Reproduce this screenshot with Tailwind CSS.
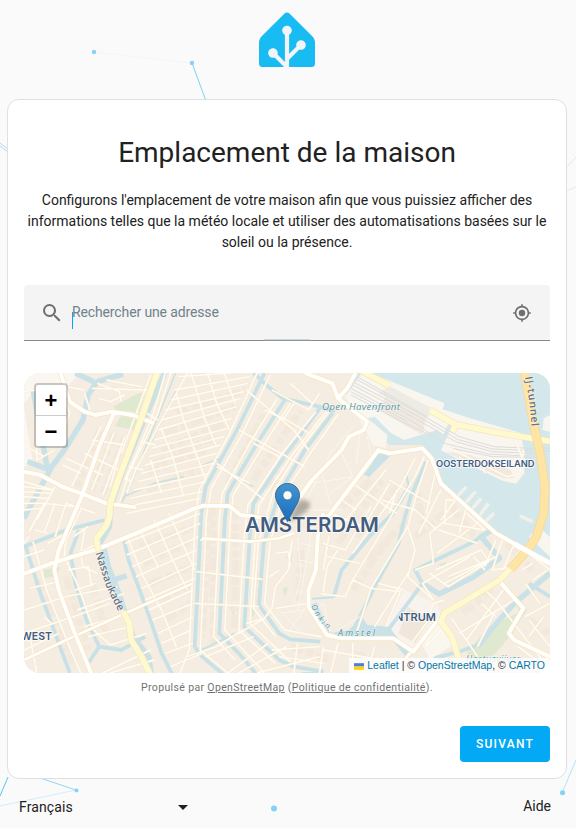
<!DOCTYPE html>
<html lang="fr">
<head>
<meta charset="utf-8">
<title>Home Assistant</title>
<script src="https://cdn.jsdelivr.net/npm/@tailwindcss/browser@4"></script>
</head>
<body class="relative h-[828px] w-[576px] overflow-hidden bg-[#fafafa] font-[Roboto,sans-serif] text-[#212121]">
<svg class="absolute inset-0" width="576" height="828" fill="none" stroke="#7fd0f7" stroke-width="1">
  <path d="M94 52 192 63" stroke="#f3f6f7"/><path d="M192 63 206 101"/>
  <path d="M0 143 8 149M0 146 8 152" stroke="#a9def8"/><path d="M576 157 566 168M576 187 566 191" stroke="#d5edf8"/>
  <path d="M0 796 8 777" stroke="#5cc3f5"/><path d="M40 778 76 790" stroke="#90d6f7"/><path d="M76 790 0 806" stroke="#d0edfb"/><path d="M562 793 576 760" stroke="#b5e2f8"/>
  <g fill="#83d2f8" stroke="none"><circle cx="94" cy="52" r="2.2"/><circle cx="192" cy="63" r="2.2"/><circle cx="76.500" cy="790.500" r="2"/><circle cx="274" cy="808.500" r="3"/><circle cx="562.500" cy="792.800" r="2.500"/></g>
</svg>
<div class="relative ml-[7px] flex w-[560px] flex-col">
  <header class="flex h-[99px] justify-center pt-[11px]">
    <svg width="56" height="56" viewBox="0 0 240 240"><path fill="#18bcf2" d="M240 224.762a15 15 0 0 1-15 15H15a15 15 0 0 1-15-15v-90c0-8.250 4.770-19.769 10.610-25.609l98.780-98.780c5.830-5.830 15.380-5.830 21.210 0l98.790 98.789c5.830 5.830 10.610 17.360 10.610 25.610z"/><path fill="#f2f4f9" d="m107.270 239.762-40.630-40.630c-2.090.72-4.320 1.130-6.640 1.130-11.300 0-20.500-9.200-20.500-20.500s9.200-20.500 20.500-20.500 20.500 9.200 20.500 20.500c0 2.330-.41 4.560-1.130 6.650l31.630 31.630v-115.880c-6.800-3.340-11.500-10.320-11.500-18.390 0-11.300 9.200-20.500 20.500-20.500s20.500 9.200 20.500 20.500c0 8.070-4.700 15.050-11.500 18.390v81.270l31.460-31.460c-.62-1.960-.96-4.040-.96-6.200 0-11.300 9.200-20.500 20.500-20.500s20.500 9.200 20.500 20.500-9.200 20.500-20.500 20.500c-2.500 0-4.880-.47-7.090-1.290L129 208.892v30.880z"/></svg>
  </header>
  <main class="flex h-[680px] flex-col rounded-xl border border-[#e0e0e0] bg-white px-4 pt-[35px]">
    <h1 class="text-center text-[28px] leading-9">Emplacement de la maison</h1>
    <p class="-mx-1 mt-[19px] text-center text-sm leading-[21px]">Configurons l'emplacement de votre maison afin que vous puissiez afficher des<br>informations telles que la météo locale et utiliser des automatisations basées sur le<br>soleil ou la présence.</p>
    <div class="relative mt-8 flex h-14 shrink-0 items-center rounded-t border-b border-[#8a8a8a] bg-[#f4f4f4] pr-4 pl-4">
      <svg class="size-6" viewBox="0 0 24 24" fill="#6f6f6f"><path d="M9.500 3A6.500 6.500 0 0 1 16 9.500c0 1.610-.59 3.090-1.560 4.230l.27.270h.79l5 5-1.500 1.500-5-5v-.79l-.27-.27A6.516 6.516 0 0 1 9.500 16 6.500 6.500 0 0 1 3 9.500 6.500 6.500 0 0 1 9.500 3m0 2C7 5 5 7 5 9.500S7 14 9.500 14 14 12 14 9.500 12 5 9.500 5Z"/></svg>
      <span class="mb-0.5 ml-2 text-sm tracking-[-0.13px] text-[#70828a]">Rechercher une adresse</span>
      <span class="absolute top-[27px] left-12 h-[17px] w-px bg-[#03a9f4]"></span>
      <span class="absolute -bottom-px left-[240px] h-0.5 w-[46px] bg-[#8fa9b4]/40"></span>
      <svg class="ml-auto size-6" viewBox="0 0 24 24"><g transform="translate(2.400 2.400) scale(.8)"><path fill="#6f6f6f" d="M12 8a4 4 0 0 1 4 4 4 4 0 0 1-4 4 4 4 0 0 1-4-4 4 4 0 0 1 4-4m-8.950 5H1v-2h2.050C3.500 6.830 6.830 3.500 11 3.050V1h2v2.050c4.170.45 7.500 3.780 7.950 7.950H23v2h-2.050c-.45 4.170-3.780 7.500-7.950 7.950V23h-2v-2.050C6.830 20.500 3.500 17.170 3.050 13M12 5a7 7 0 0 0-7 7 7 7 0 0 0 7 7 7 7 0 0 0 7-7 7 7 0 0 0-7-7Z"/></g></svg>
    </div>
    <div class="relative mt-8 h-[300px] shrink-0 overflow-hidden rounded-2xl bg-[#f5eee3]">
      <svg class="block [&_g_path]:[vector-effect:non-scaling-stroke]" width="526" height="300" viewBox="24 373 526 300" fill="none" stroke-linejoin="round">
        <defs>
          <linearGradient id="pin" x2="0" y2="1"><stop stop-color="#4295d0"/><stop offset="1" stop-color="#1b6cbf"/></linearGradient>
          <filter id="soft"><feGaussianBlur stdDeviation="2"/></filter>
          <clipPath id="tile"><path d="M399 600h60v30h-60z"/></clipPath>
          <g id="banks"><path d="M735 15 660 190 575 355 562 440 545 840 620 909M700 9 625 190 542 360 531 450 515 840 490 909M790 100 715 230 635 375 627 450 612 780 720 909M755 85 680 220 605 370 597 450 582 800 640 870M860 125 765 255 675 405 665 500 650 780 750 880M887 125 795 255 705 405 695 505 680 760 790 875M922 130 845 250 775 370 755 440 735 520 720 700 775 780 875 800M895 125 815 240 745 365 725 440 703 520 690 715 750 800"/></g>
          <g id="lanes">
            <path d="M485 20 630 9M475 60 680 20M465 90 675 40M450 120 665 65M440 150 655 85M430 180 645 110M420 210 630 145M412 235 620 175M405 260 610 200M395 285 600 225M385 310 590 250M375 335 580 280M365 360 570 310M355 385 560 335M365 405 550 365M345 430 545 385"/>
            <path d="M520 9 540 80 555 140 590 230M565 9 590 100 625 180M610 9 640 100M480 70 500 150 530 240 560 330M440 180 470 260 500 380M410 270 440 370M460 430 530 600M420 450 470 570 510 660M380 480 430 590M350 510 390 620 440 720 480 830"/>
            <path d="M345 555 545 460M360 590 540 500M370 620 535 540M385 655 535 580M395 690 530 625M405 720 525 660M415 750 525 700M430 790 525 740M440 820 520 780M450 850 525 820M465 890 550 850M340 520 545 430"/>
            <path d="M65 65 180 50 230 60M100 25 100 270 150 240M140 9 165 50 190 130 170 190M65 225 120 260M250 55 400 60M265 40 325 65 330 95M230 70 245 120M250 210 340 225M230 250 325 300M180 265 280 315M170 285 220 310M310 190 250 360M275 170 195 350M340 200 280 375M330 230 300 350M65 335 145 360 65 350M65 365 140 370M65 380 130 385M65 400 120 400M65 420 110 415M100 450 150 350M80 485 120 400 200 410M120 490 150 400M150 500 180 400 260 430M180 510 220 420M80 500 65 520M95 480 130 490"/>
            <path d="M290 30 385 50M270 85 300 95 340 75M410 15 330 250M465 9 430 130 350 310 325 400M450 9 415 140 340 330M400 130 430 150M385 215 425 225M350 290 390 300M340 325 360 335M510 9 440 150 370 300 345 370"/>
            <path d="M65 560 120 540M90 515 130 670 200 860 220 909M180 500 175 560 210 640 255 780 300 825 400 790M230 480 220 550 225 590 265 610M190 560 260 525M185 600 240 590 250 650M205 660 260 640M80 655 160 635M65 720 180 680 320 650M65 790 200 740 300 700M120 740 140 760M100 909 80 790M65 840 160 790M210 720 340 670M230 770 350 730M240 800 355 770M280 909 410 840M300 909 420 870M200 500 240 470M130 520 180 490"/>
            <path d="M650 180 830 290M590 280 720 390M535 605 715 628M530 700 705 710M545 510 680 515M670 60 800 180 840 240M720 120 780 150M740 60 840 120 870 70M790 40 850 100M590 290 680 340M690 220 760 260M780 150 850 195M800 100 770 150"/>
            <path d="M795 510 785 600 750 650 740 715M750 550 785 545 790 590M735 620 760 600M740 715 720 745 670 760M750 715 840 700M650 790 720 745M660 780 590 830 510 860M560 860 690 800M620 909 730 820M650 909 780 830M700 909 870 860M760 860 880 880M810 820 800 909M880 830 870 909M880 840 1040 870M920 820 900 909M960 820 960 909M1020 830 1000 909M740 840 870 830"/>
            <path d="M880 430 920 480 1050 300M900 430 990 470 1060 340M930 390 970 420M960 340 1080 430M960 550 1090 350 1130 265M880 520 940 540 1010 410M890 560 980 580M880 600 895 500M880 665 890 590 920 540M940 680 875 672M940 680 960 630 1130 320 1155 260M960 630 1010 655M970 790 1010 655 1110 470 1140 350 1165 270M1020 770 1110 610M1010 655 1090 665 1050 770M1030 640 1100 660M1040 390 1130 420 1190 480M1060 330 1170 400M1080 360 1060 430M1110 470 1130 540 1110 620 1180 690M1170 490 1180 580 1130 600M1170 490 1270 400M1195 480 1300 520M1215 390 1210 460 1320 480M1215 390 1250 390M1200 360 1140 490M1185 310 1160 430M1240 390 1200 450M1270 410 1250 490M1310 450 1190 550M1270 430 1320 480M1185 600 1310 540 1330 575 1220 650 1170 610M1210 640 1350 560M1220 620 1330 570M1290 560 1320 600"/>
            <path d="M1180 690 1150 640 1280 560M1210 690 1180 700 1160 760 1120 820M1180 770 1160 830 1200 780 1210 810 1180 860M1250 790 1400 690M1270 810 1370 660M1300 830 1350 720M1230 745 1300 860M1310 700 1350 740M1320 660 1350 690M1350 510 1320 590M1370 500 1340 600 1400 590M1400 520 1370 600M1420 600 1450 580M1450 560 1497 600M1430 740 1497 700M1440 750 1497 830M1440 800 1480 740M1410 830 1460 870M1350 690 1497 900M1430 640 1470 700M1450 630 1490 600"/>
            <path d="M1225 235 1380 320 1415 310 1425 240M1280 150 1270 170 1390 190M1400 200 1420 260M1250 260 1270 290M1310 265 1320 310"/>
          </g>
          <g id="streets"><path d="M65 305 110 315 170 350 225 372 290 400 370 412M65 612 140 580 270 535 370 490 530 415 555 407 625 408 655 435 730 445M312 125 270 230 225 372 160 540 148 600 160 660 200 780 250 915M165 9 190 95 230 125 260 135 305 125 360 135 420 160M830 9 905 40 920 85 1000 155 990 180 950 200 930 240 850 330 810 390M968 9 945 55 920 85M880 450 900 430 1030 240 1060 250 1150 235 1175 265 1200 340 1350 490 1430 540 1497 580M880 430 865 500 860 600 840 660 840 710 890 795 930 805 1070 805 1125 845 1195 745M1360 635 1425 715 1385 790 1400 810 1497 860"/></g>
          <g id="avenues"><path d="M550 505 680 515 760 505 800 490M65 870 200 800 340 730 525 640M1120 845 1100 870 1020 890"/></g>
          <g id="arterials"><path d="M430 0 380 160 325 320 300 400 298 440 290 465 263 505 267 540M335 725 352 760 357 810 385 860 412 920M980 0 1060 47M1170 120 1240 163 1350 187 1497 214M1240 163 1232 185M1390 595 1360 630 1210 730 1200 755 1230 800 1250 870"/></g>
          <g id="tunnel"><path d="M1427 0 1450 150 1470 250 1484 350 1480 430 1460 500 1440 535 1390 597"/></g>
        </defs>
        <g transform="translate(0 370) scale(.36735 .33333)">
          <path fill="#f5ede1" d="M0 0H1568V930H0z"/>
          <path fill="#faf7f2" d="M65 100 100 60 170 70 215 9H65zM65 110 90 280 65 290zM1140 800 1200 740 1240 820 1170 870z"/>
          <path fill="#f8f3ee" d="M1050 770 1100 660 1190 700 1200 740 1130 840 1070 800z"/>
          <path fill="#f1e6db" d="M1085 790 1110 710 1170 750 1130 820z"/>
          <!-- open water and station island -->
          <path fill="#d4e8ec" d="M1010 9H1497V575L1420 535 1340 490 1195 340 1170 255 1150 225 1060 225 1000 160 940 70 965 9z"/>
          <path fill="#f9f5ef" d="M985 9H1010L1100 50 1210 100 1205 118 1280 145 1415 188 1430 250 1427 310 1405 341 1370 333 1260 275 1190 235 1210 200 1190 180 1100 210 1065 190 1020 140 1000 145 1055 195 1050 235 1015 225 990 170 940 80zM1480 145 1497 135V185L1477 180zM1440 500 1497 560V500L1465 470z"/>
          <path fill="#f1e9df" d="M1210 245 1280 255 1390 300 1400 325 1370 325zM1050 80 1160 145 1150 195 1030 120z"/>
          <path fill="#eeebe5" d="M1060 48 1175 115 1165 145 1030 70z"/>
          <path stroke="#d4e8ec" stroke-width="4" d="M1225 165 1195 240"/>
          <g stroke="#dcdcdb" stroke-width="1"><path d="M960 45 1130 145 1240 215 1340 245 1450 250M965 38 1140 140 1245 208 1340 237 1450 242M970 28 1150 136 1250 200 1345 230 1450 235M975 22 1160 138M955 55 1120 152 1210 220 1330 252 1430 258M955 65 1110 155M955 75 1095 155 1180 200M1230 235 1340 260 1450 262M1475 235H1497M1475 243H1497"/></g>
          <g fill="#dfe9d0"><path d="M308 110 335 93 380 68 395 70 378 128 345 122 320 125zM330 136 375 150 365 180 313 168zM355 207 370 210 362 222 350 218zM345 370 335 402 322 400zM120 600 165 590 150 620 120 625zM1330 770 1435 715 1395 790 1345 855 1300 870 1270 850zM1400 690 1435 720 1420 745zM780 560 797 550 792 585zM770 655 785 650 775 680zM1190 585 1215 575 1215 592zM1290 670 1320 660 1315 675zM625 710 645 715 635 735zM680 710 695 715 690 745z"/></g>
          <!-- building blocks -->
          <g stroke="#f2e8dc" stroke-width="7" stroke-dasharray="13 4 7 3"><path d="M270 180 210 350M310 190 250 360M340 200 280 370M580 400V820M640 410V780M710 520 690 700M620 340 730 110M690 330 820 120M730 360 860 150M570 420 550 800M400 360 540 300M400 310 560 240M420 280 590 200M440 240 610 160M450 190 640 110M480 130 670 60M380 530 530 470M390 580 530 510M410 640 520 590M430 690 520 650M450 750 520 700M920 520 1040 330M970 500 1080 350M1000 570 1110 450M960 660 1070 490M100 630 200 880M180 620 240 840M250 640 290 790M1220 640 1330 570M1260 730 1340 660M1440 750 1497 790M1380 520 1450 600M820 540 810 700M790 830 900 870M960 850 1060 880M1130 500 1210 430M1230 410 1290 500M1130 320 1150 460M930 410 1010 330"/></g>
          <!-- canals -->
          <g stroke="#c8e1e6" stroke-width="3.800"><path d="M720 9 645 180 560 350 548 430 530 830 550 860 610 915M775 90 700 220 620 370 612 450 597 790 650 850 700 915M870 115 780 250 690 400 680 500 665 770 760 870 800 890 880 905M905 130 830 240 760 370 740 440 718 520 705 705 760 790 790 808 872 815M690 9 730 50 770 85 870 110 912 125M65 530 180 480 285 450M215 480 192 550 205 640 235 750 270 830 330 840 395 800M270 830 240 880M70 530 110 670 170 850 190 909M335 500 350 570 400 720 440 850 470 915M1160 275 1118 380 1100 450 1085 520 1020 650 960 785M1113 350 1070 430 1005 500 930 600 908 682M1150 640 1060 775M1300 825 1250 845 1180 865M1440 640 1497 680M1320 490 1290 515 1205 560 1130 600 1150 640"/></g>
          <g stroke="#c8e1e6" stroke-width="2"><path d="M548 845 490 880M530 850 640 790M1105 310 1113 350M908 682 850 686M820 910 870 908"/></g>
          <g stroke="#cae2e7" stroke-width="5.500"><path d="M335 12 265 35 240 75 226 150 175 240 141 290 65 445M205 9 255 35M90 60 130 300M75 275 135 300M448 9 400 130 332 310 302 410 298 470 272 520M281 525 295 590 345 740 362 800 405 860 412 915M310 630 345 618M1040 260 1000 315M855 700 885 780 900 795 1020 782 1070 800 1110 855M1150 640 1195 672 1290 620 1360 565 1310 500 1340 480M1497 610 1400 700 1355 755 1300 830"/></g>
          <path fill="#cae2e7" d="M283 540 310 610 335 680 347 735 325 720 300 650 275 560zM950 780 985 740 1000 765 1060 770 1110 850 1070 805 920 800zM1010 285 1030 250 1062 258 1005 320 990 315z"/>
          <g stroke="#cbe0df" stroke-width="1.500"><path d="M478 9 350 360 325 402M338 380 420 340 500 320M540 290 600 265M400 645 520 590M480 60 410 220M590 290 690 350"/></g>
          <!-- side streets -->
          <use href="#lanes" stroke="#fbe9c8" stroke-opacity=".75" stroke-width="2.400"/>
          <use href="#banks" stroke="#fbe8c6" stroke-width="2.200"/>
          <use href="#lanes" stroke="#fffdf7" stroke-width="1.400"/>
          <use href="#banks" stroke="#fffdf8" stroke-width="1.500"/>
          <g stroke="#fbf6ee" stroke-width="1"><path d="M820 420 930 420M830 400 900 250 960 170M850 470 830 600 810 720M810 500 820 620 800 700M840 700 790 780M830 720 760 730M860 720 880 700 900 790M890 800 980 740M740 740 790 800M770 730 820 790M930 250 960 320 900 370M980 190 970 280M1000 200 1010 260M850 340 960 320M870 290 900 400M820 520 860 530M815 570 855 580"/></g>
          <g stroke="#f3f0ea" stroke-width="3.500"><path d="M1270 350 1240 385M1295 365 1250 420M1310 385 1275 430M1330 400 1300 445M1345 430 1310 465M1415 438 1450 455"/></g>
          <!-- main streets -->
          <use href="#avenues" stroke="#fae4b8" stroke-width="3.800"/><use href="#avenues" stroke="#fff" stroke-width="2.600"/>
          <use href="#streets" stroke="#fae4b8" stroke-width="5.200"/><use href="#streets" stroke="#fff" stroke-width="3.900"/>
          <!-- arterial roads -->
          <g stroke="#fff1cf" stroke-width="3"><path d="M267 540 290 640 335 725"/></g>
          <use href="#arterials" stroke="#f8e5b8" stroke-width="6.800"/><use href="#arterials" stroke="#fff9d0" stroke-width="5.500"/>
          <use href="#tunnel" stroke="#f7d898" stroke-width="9"/><use href="#tunnel" stroke="#fee5a5" stroke-width="7.500"/>
          <g stroke="#fff" stroke-width="5"><path d="M1400 522 1497 580"/></g>
        </g>
        <!-- place names -->
        <g font-family="Inter, sans-serif" font-weight="600" fill="#435c80" stroke="#fff" stroke-opacity=".7" stroke-width="2" paint-order="stroke">
          <text x="245" y="531.500" font-size="19.500" textLength="134" lengthAdjust="spacingAndGlyphs">AMSTERDAM</text>
          <text x="436" y="467" font-size="9" textLength="98.500" lengthAdjust="spacingAndGlyphs">OOSTERDOKSEILAND</text>
          <text x="395" y="620.800" font-size="10.500" textLength="41" lengthAdjust="spacingAndGlyphs" clip-path="url(#tile)">NTRUM</text>
          <text x="21" y="640" font-size="10.500" textLength="31" lengthAdjust="spacingAndGlyphs">WEST</text>
        </g>
        <path id="nas" d="M95.500 553 106 586 119 613"/><path id="ij" d="M525 377 529 400 532 430"/><path id="rok" d="M311 606C315 615 320 625 331 631"/>
        <g font-family="'Open Sans', sans-serif" font-weight="600" fill="#64748f" stroke="#fff" stroke-opacity=".4" stroke-width="1.500" paint-order="stroke">
          <text font-size="10.500" textLength="63"><textPath href="#nas" textLength="63">Nassaukade</textPath></text>
          <text font-size="10.500" textLength="50"><textPath href="#ij" textLength="50">IJ-tunnel</textPath></text>
          <g fill="#5599a6" font-style="italic" font-weight="500">
            <text x="322" y="410" font-size="9.800" textLength="78">Open Havenfront</text>
            <text font-size="8" textLength="29"><textPath href="#rok">Onkin</textPath></text>
            <text x="338" y="636" font-size="9" textLength="37">Amstel</text>
            <text x="466" y="662" font-size="9" textLength="54">Hortusvijver</text>
          </g>
        </g>
        <!-- marker -->
        <path d="M288 522 296 504Q303 496 310 503 311 510 300 516Z" fill="#000" fill-opacity=".28" filter="url(#soft)"/>
        <path fill="url(#pin)" stroke="#2e6c97" stroke-width="1" d="M287.500 483.500c-6.800 0-12 5.300-12 12 0 3.100 1.300 6.300 3.300 9.600l8.700 16.400 8.700-16.400c2-3.300 3.300-6.500 3.300-9.600 0-6.700-5.200-12-12-12z"/>
        <circle cx="287.500" cy="495.300" r="4.500" fill="#fff" stroke="#2e6c97" stroke-width=".6"/>
      </svg>
      <div class="absolute top-2.5 left-2.5 flex w-[34px] flex-col overflow-hidden rounded-[4px] border-2 border-black/20 bg-white bg-clip-padding text-center font-['Liberation_Sans',sans-serif] text-[22px] font-bold text-black">
        <span class="h-[31px] border-b border-[#ccc] leading-[32px]">+</span><span class="h-[30px] leading-[32px]">−</span>
      </div>
      <div class="absolute right-0 bottom-0 flex h-[15px] items-center bg-white/80 pt-px pr-[5px] pl-[5px] font-['Liberation_Sans',sans-serif] text-[10.500px] whitespace-pre text-[#333]"><svg class="mr-[3px]" width="10" height="7" viewBox="0 0 12 8"><path fill="#4c7be1" d="M0 0h12v4H0z"/><path fill="#ffd500" d="M0 4h12v4H0z"/></svg><span class="text-[#0078a8]">Leaflet</span> | © <span class="text-[#0078a8]">OpenStreetMap</span>, © <span class="text-[#0078a8]">CARTO</span></div>
    </div>
    <p class="mt-1.5 text-center text-[10.500px] leading-[18px] tracking-[0.35px] text-[#727272]">Propulsé par <u>OpenStreetMap</u> (<u>Politique de confidentialité</u>).</p>
    <button class="mt-[29px] ml-auto h-9 w-[90px] rounded bg-[#03a9f4] text-xs font-medium tracking-[1.250px] text-white">SUIVANT</button>
  </main>
  <footer class="flex h-[49px] items-center pt-[7px] pr-4 pl-3 text-sm">
    <span class="tracking-[0.12px]">Français</span>
    <svg class="ml-[105px]" width="10" height="5" viewBox="0 0 10 5"><path d="M0 0h10L5 5z" fill="#212121"/></svg>
    <span class="-mt-0.5 ml-auto">Aide</span>
  </footer>
</div>
</body>
</html>
